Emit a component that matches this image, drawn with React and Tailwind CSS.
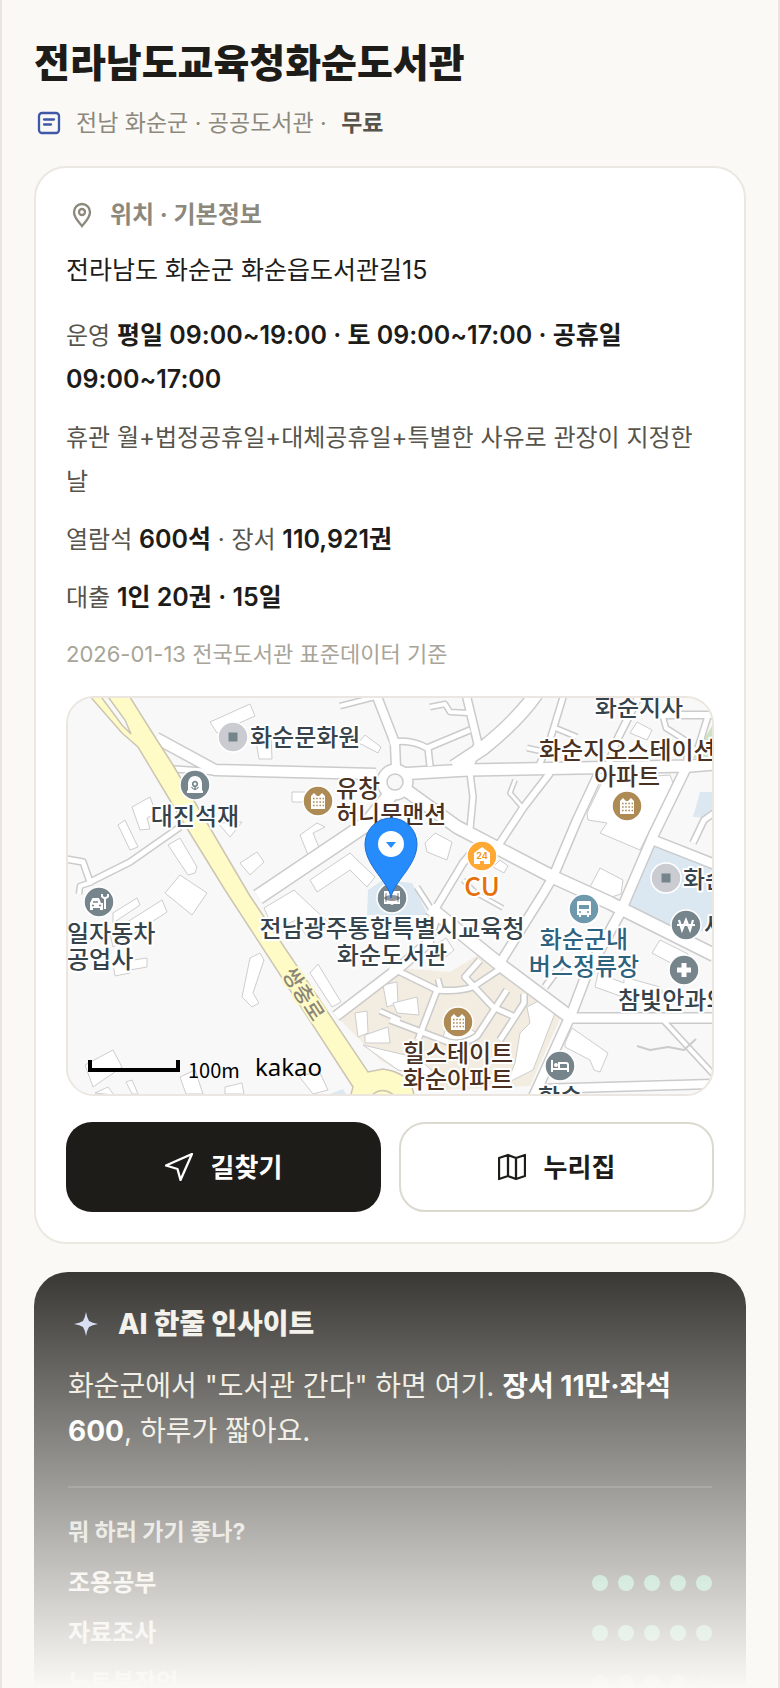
const facts = [
  { label: '운영', parts: [['b', '평일 09:00~19:00 · 토 09:00~17:00 · 공휴일 09:00~17:00']] },
  { label: '휴관', parts: [['t', '월+법정공휴일+대체공휴일+특별한 사유로 관장이 지정한 날']] },
  { label: '열람석', parts: [['b', '600석'], ['t', ' · 장서 '], ['b', '110,921권']] },
  { label: '대출', parts: [['b', '1인 20권 · 15일']] },
];

const purposes = [
  { name: '조용공부', score: 5 },
  { name: '자료조사', score: 5 },
  { name: '노트북작업', score: 4 },
];

// [path, width]
const roads = [
  ['M88 40L147 72L308 76', 10],
  ['M106 71L150 74', 5],
  ['M330 76L400 72L622 68L646 66', 11],
  ['M328 70L327 45L308 -4', 8],
  ['M272 8L311 -2', 4],
  ['M322 45Q340 40 359 50L402 32', 5],
  ['M360 50L362 68', 5],
  ['M398 -4L410 46L402 68', 7],
  ['M468 -4Q450 22 415 50L386 69', 13],
  ['M362 9L377 6L382 14L400 15', 4],
  ['M496 -4L482 42L470 70', 5],
  ['M485 29L509 39', 4],
  ['M459 50L482 55', 4],
  ['M572 -4L549 42L540 68', 6],
  ['M592 17H646', 6],
  ['M595 19L598 30L620 44L618 66', 4],
  ['M640 18L630 50', 5],
  ['M402 75L405 99L402 131', 5],
  ['M482 75L455 110L430 148', 6],
  ['M447 82L442 95L455 110', 3],
  ['M531 75L509 122L485 179L475 196L432 265', 8],
  ['M618 70L585 138L552 215L519 275L505 312L465 400', 9],
  ['M335 90L389 129L485 179L542 205L646 257', 12],
  ['M585 142L646 166', 9],
  ['M646 115L636 122L625 145', 5],
  ['M326 92L300 125L190 199', 14],
  ['M300 130L330 172', 5],
  ['M412 145L395 165L365 215', 6],
  ['M395 182L408 195L435 210', 3],
  ['M349 189L367 217', 4],
  ['M362 210L435 269L502 319', 12],
  ['M368 215L360 245L332 269L268 318', 9],
  ['M504 320H646', 9],
  ['M469 391L646 386', 8],
  ['M595 322L646 377', 4],
  ['M477 289L497 262', 5],
  ['M-2 161L15 164L22 184L62 164L112 129', 5],
  ['M11 196L12 188L24 184', 4],
];

const estateRoads = [
  ['M322 269L369 292Q390 294 405 289L435 269', 5],
  ['M369 292L350 342', 5],
  ['M412 262L397 279L425 309L447 319', 5],
  ['M439 292L409 338Q395 348 380 344L322 322', 5],
  ['M456 296L456 305L432 342', 5],
  ['M370 281L373 292', 4],
  ['M312 313L332 322', 4],
];

const buildings = [
  '142,24 182,6 187,18 149,35', '187,37 203,37 204,61 191,61', '290,45 297,37 313,49 310,55 295,47',
  '64,109 82,99 88,115 79,120 82,131 72,132', '50,127 57,122 70,149 62,152',
  '100,147 112,140 129,169 127,175 120,177', '172,165 189,154 196,164 182,177', '150,125 174,124 162,139',
  '97,195 112,177 139,195 124,217', '232,137 249,125 257,129 245,135 252,152 242,162',
  '224,94 245,94 245,104 224,104', '242,182 282,155 307,179 299,189 282,172 249,194',
  '182,260 192,255 196,262 185,295 191,305 184,309 174,299', '17,367 45,352 54,369 25,389',
  '242,275 250,266 273,304 264,309', '45,215 69,200 72,207 45,225', '42,235 94,202 99,214 45,249',
  '45,265 79,260 79,269 62,272 62,275 47,278', '196,210 226,192 262,226 240,240 228,222 206,232',
  '112,379 127,372 135,396 118,396', '157,389 174,385 176,396 157,396', '230,377 252,375 260,392 245,396',
  '27,395 40,389 46,397', '58,384 64,382 70,396 64,396',
  '315,287 329,284 330,305 319,309', '287,315 299,313 300,335 290,339', '297,337 320,329 322,345 297,345',
  '295,347 350,360 372,380 330,372', '325,305 349,299 351,317 329,315',
  '459,309 472,302 487,315 465,372 439,385 447,365 452,335 462,325', '375,339 382,319 409,335 389,344',
  '497,345 504,330 540,355 532,374 526,372 522,362 497,349', '584,255 592,242 620,256 612,270',
  '530,275 556,285 556,279 592,289 595,295 555,299 527,289', '522,189 532,170 555,182 553,196 540,200',
  '357,145 367,135 384,144 379,162 359,154', '519,115 535,82 602,77 605,85 572,152 532,135 539,125 520,122',
  '562,35 569,24 584,32 579,42', '425,169 432,162 440,168 436,175', '366,248 378,240 386,252 374,262',
];

const labels = [
  { x: 182, y: 48, text: '화순문화원' },
  { x: 127, y: 127, text: '대진석재', anchor: 'middle' },
  { x: 268, y: 99, text: '유창', fill: '#4a3122' },
  { x: 268, y: 125, text: '허니문맨션', fill: '#4a3122' },
  { x: -1, y: 244, text: '일자동차' },
  { x: -1, y: 270, text: '공업사' },
  { x: 324, y: 239, text: '전남광주통합특별시교육청', anchor: 'middle' },
  { x: 324, y: 266, text: '화순도서관', anchor: 'middle' },
  { x: 414, y: 198, text: 'CU', anchor: 'middle', fill: '#e4700b', size: 26 },
  { x: 516, y: 250, text: '화순군내', anchor: 'middle', fill: '#2d637e' },
  { x: 516, y: 277, text: '버스정류장', anchor: 'middle', fill: '#2d637e' },
  { x: 550, y: 311, text: '참빛안과의원' },
  { x: 390, y: 364, text: '힐스테이트', anchor: 'middle', fill: '#4a3122' },
  { x: 390, y: 390, text: '화순아파트', anchor: 'middle', fill: '#4a3122' },
  { x: 492, y: 408, text: '학숙', anchor: 'middle' },
  { x: 571, y: 18, text: '화순지사', anchor: 'middle' },
  { x: 471, y: 61, text: '화순지오스테이션', fill: '#4a3122' },
  { x: 559, y: 87, text: '아파트', anchor: 'middle', fill: '#4a3122' },
  { x: 615, y: 190, text: '화순' },
  { x: 636, y: 236, text: '새' },
];

function Poi({ x, y, color = '#76858c', children }) {
  return (
    <g transform={`translate(${x} ${y})`}>
      <circle r="15" fill={color} stroke="#fff" strokeWidth="1.5" />
      {children}
    </g>
  );
}

function Apartment() {
  return (
    <>
      <path d="M-7 8V-5L-4 -8L-1 -5H1L4 -8L7 -5V8Z" fill="#fff" />
      <path d="M-5 -2.5H6M-5 1H6M-5 4.5H6" stroke="#ae8a54" strokeWidth="1.6" strokeDasharray="1.6 1.6" />
    </>
  );
}

function LibraryMap() {
  return (
    <svg viewBox="0 0 644 396" preserveAspectRatio="xMidYMid slice" className="block h-[396px] w-full" role="img" aria-label="도서관 주변 지도">
      <rect width="644" height="396" fill="#f8f8f8" />
      <polygon points="272,322 332,270 382,274 412,256 432,272 494,316 462,388 372,392 340,378 312,362" fill="#f3ece0" />
      <polygon points="569,185 585,145 609,155 646,172 646,230 612,240 560,205" fill="#dbe8f1" />
      <polygon points="625,119 632,94 646,94 646,120" fill="#dbe8f1" />
      <polygon points="299,217 300,192 315,182 344,185 360,217" fill="#dbe8f1" />
      <polygon points="262,396 275,391 278,396" fill="#dbe8f1" />
      <polygon points="646,25 637,39 625,60 646,60" fill="#cfe3c4" />

      {buildings.map((points) => (
        <polygon key={points} points={points} fill="#fff" stroke="#cdcdcd" strokeWidth="1" />
      ))}

      <g fill="none" strokeLinejoin="round">
        {[...roads, ...estateRoads].map(([d, w]) => (
          <path key={d} d={d} stroke="#cbcbcb" strokeWidth={w + 3} />
        ))}
        <circle cx="327" cy="84" r="18" fill="#fff" stroke="#cbcbcb" strokeWidth="1.5" />
        {[...roads, ...estateRoads].map(([d, w]) => (
          <path key={d} d={d} stroke="#fff" strokeWidth={w} />
        ))}
        <circle cx="327" cy="84" r="8" fill="#f8f8f8" stroke="#cbcbcb" strokeWidth="1.5" />
        <path d="M569 348L582 352L600 349L616 352L628 341" stroke="#cbcbcb" strokeWidth="2" />
      </g>

      <path
        d="M20 -4L54 35L70 49L112 119L157 192L285 389L282 400H347L343 386Q335 374 315 371L300 374L182 198L105 67L87 39L60 -4Z"
        fill="#fefbc6"
        stroke="#cbc5b2"
        strokeWidth="1.5"
      />
      <path d="M31 -4L54 27L63 36L57 22L38 -4Z" fill="#f8f8f8" stroke="#cbc5b2" strokeWidth="1.5" />
      <path d="M304 397Q314 388 326 397" fill="none" stroke="#cbc5b2" strokeWidth="1.5" />

      <Poi x={165} y={39} color="#cbccd1">
        <rect x="-4.5" y="-4.5" width="9" height="9" fill="#76858c" />
      </Poi>
      <Poi x={598} y={180} color="#cbccd1">
        <rect x="-4.5" y="-4.5" width="9" height="9" fill="#76858c" />
      </Poi>
      <Poi x={127} y={87}>
        <path d="M-8 8V5.5H-7V-2Q-6 -9 0 -9Q6 -9 7 -2V5.5H8V8Z" fill="#fff" />
        <circle cy="-1" r="2.3" fill="none" stroke="#76858c" strokeWidth="1.7" />
        <path d="M-3.5 2Q0 7 3.5 2M0 2V5" fill="none" stroke="#76858c" strokeWidth="1.3" />
      </Poi>
      <Poi x={250} y={103} color="#ae8a54"><Apartment /></Poi>
      <Poi x={559} y={108} color="#ae8a54"><Apartment /></Poi>
      <Poi x={390} y={324} color="#ae8a54"><Apartment /></Poi>
      <Poi x={31} y={204}>
        <path d="M-9 8V1L-6.5 -4H0L2 1H4V8H1V6H-6V8Z" fill="#fff" />
        <path d="M6 7V-3M3 -8V-5.5Q6 -2.5 9 -5.5V-8" fill="none" stroke="#fff" strokeWidth="2" />
        <path d="M-6 0H-1M-7 3.5H-5M0 3.5H2" stroke="#76858c" strokeWidth="1.5" />
      </Poi>
      <Poi x={324} y={200}>
        <path d="M-8 -7H-2L0 -5L2 -7H8V6H2L0 7L-2 6H-8Z" fill="#fff" />
        <path d="M-6 -5V4M6 -5V4" stroke="#76858c" strokeWidth="1" />
      </Poi>
      <Poi x={414} y={158} color="#ffa834">
        <path d="M-8 8V-3L0 -9L8 -3V8H2V5H-2V8Z" fill="#fff" />
        <text y="3" textAnchor="middle" fontSize="9" fontWeight="700" fill="#f39a22" className="[font-family:Inter,sans-serif]">24</text>
      </Poi>
      <Poi x={516} y={211} color="#6e98ab">
        <path d="M-6 -8H6L7 -7V6H5V8H3V6H-3V8H-5V6H-7V-7Z" fill="#fff" />
        <path d="M-5 -4H5V0H-5Z" fill="#6e98ab" />
        <path d="M-5 3H-3M3 3H5" stroke="#6e98ab" strokeWidth="1.5" />
      </Poi>
      <Poi x={618} y={227}>
        <path d="M-7 -5L-4 5L0 -5L4 5L7 -5M-9 0H9" fill="none" stroke="#fff" strokeWidth="2.2" />
      </Poi>
      <Poi x={616} y={272}>
        <path d="M0 -7V7M-7 0H7" stroke="#fff" strokeWidth="5" />
      </Poi>
      <Poi x={492} y={368}>
        <path d="M-8 -6V6M-8 3H8M8 6V-1Q8 -3 6 -3H-1V3" fill="none" stroke="#fff" strokeWidth="2" />
        <circle cx="-4" cy="-1" r="2" fill="#fff" />
      </Poi>

      <g
        className="[font-family:'Noto_Sans_CJK_KR',sans-serif]"
        fontWeight="500"
        stroke="#fff"
        strokeWidth="4"
        strokeLinejoin="round"
        paintOrder="stroke"
      >
        {labels.map((l) => (
          <text key={l.text + l.y} x={l.x} y={l.y} fontSize={l.size || 24} textAnchor={l.anchor} fill={l.fill || '#36434b'}>
            {l.text}
          </text>
        ))}
        <text transform="translate(236 296) rotate(57)" y="8" fontSize="21" textAnchor="middle" fill="#8b8678" stroke="#fefbc6">
          쌍충로
        </text>
      </g>

      <ellipse cx="324" cy="200" rx="8" ry="3" fill="#1f2937" opacity="0.5" />
      <path
        d="M323 200C321 184 297 168 297 146A26 26 0 0 1 349 146C349 168 325 184 323 200Z"
        fill="#268bfb"
        stroke="#1e6fd2"
        strokeWidth="1"
      />
      <circle cx="323" cy="146" r="13" fill="#fff" />
      <path d="M318 144H328L323 150Z" fill="#268bfb" />

      <path d="M22 362V372H110V362" fill="none" stroke="#000" strokeWidth="4" />
      <text x="120" y="380" fontSize="20" className="[font-family:'Noto_Sans_CJK_KR',sans-serif]">100m</text>
      <text x="187" y="378" fontSize="24" className="[font-family:'Noto_Sans',sans-serif]">kakao</text>
    </svg>
  );
}

function Dots({ score }) {
  return (
    <div className="flex gap-2.5" role="img" aria-label={`5점 만점에 ${score}점`}>
      {[1, 2, 3, 4, 5].map((n) => (
        <span key={n} className={`size-4 rounded-full ${n <= score ? 'bg-[#5cbc90]' : 'bg-white/20'}`} />
      ))}
    </div>
  );
}

export default function App() {
  return (
    <main className="relative h-screen overflow-hidden border-x-2 border-[#e9e6df] bg-[#faf9f6] px-8 pt-9 text-[#1d1c18] [font-family:Inter,'Noto_Sans_CJK_KR',sans-serif]">
      <header>
        <h1 className="text-[39px] leading-[54px] font-extrabold">전라남도교육청화순도서관</h1>
        <div className="mt-4 flex items-center gap-3 text-[23px] leading-[34px] text-[#8c887c]">
          <svg viewBox="0 0 30 30" className="size-[30px]" fill="none" stroke="#3f58a8" strokeWidth="2.3" strokeLinecap="round">
            <rect x="5" y="5" width="20" height="20" rx="3" />
            <path d="M10 11.5H20M10 16.5H17" />
          </svg>
          <p>
            전남 화순군 · 공공도서관 · <b className="ml-2 font-semibold text-[#57544b]">무료</b>
          </p>
        </div>
      </header>

      <section className="mt-[26px] rounded-[32px] border-2 border-[#ebe8e1] bg-white p-[30px]">
        <h2 className="flex items-center gap-3 text-[24px] leading-[34px] font-bold text-[#8c887c]">
          <svg viewBox="0 0 32 32" className="size-8" fill="none" stroke="currentColor" strokeWidth="2.3">
            <path d="M16 27C13 23 8 19 8 13A8 8 0 0 1 24 13C24 19 19 23 16 27Z" />
            <circle cx="16" cy="13" r="3" />
          </svg>
          위치 · 기본정보
        </h2>
        <p className="mt-4 text-[25px] leading-[44px]">전라남도 화순군 화순읍도서관길15</p>

        <div className="mt-[22px] flex flex-col gap-3.5 text-[24px] leading-[44px] text-[#57544b]">
          {facts.map((f) => (
            <p key={f.label}>
              {f.label}{' '}
              {f.parts.map(([kind, text]) =>
                kind === 'b' ? <b key={text} className="text-[25px] leading-none font-semibold text-[#1d1c18]">{text}</b> : text
              )}
            </p>
          ))}
        </div>
        <p className="mt-3.5 text-[22px] leading-10 text-[#a8a498]">2026-01-13 전국도서관 표준데이터 기준</p>

        <div className="mt-[22px] overflow-hidden rounded-[28px] border-2 border-[#ebe6df]">
          <LibraryMap />
        </div>

        <div className="mt-[26px] grid grid-cols-2 gap-[18px] text-[26px] font-bold">
          <button className="flex h-[90px] items-center justify-center gap-[18px] rounded-[26px] bg-[#1d1c18] text-white">
            <svg viewBox="0 0 28 28" className="size-7" fill="none" stroke="currentColor" strokeWidth="2.3" strokeLinejoin="round">
              <path d="M1 12.5L27 1L15.5 27L12.5 16Z" />
            </svg>
            길찾기
          </button>
          <button className="flex h-[90px] items-center justify-center gap-[18px] rounded-[26px] border-2 border-[#dcd9d0] bg-white">
            <svg viewBox="0 0 28 28" className="size-7" fill="none" stroke="currentColor" strokeWidth="2.3" strokeLinejoin="round">
              <path d="M1 5L10 2L18 5L27 2V23L18 26L10 23L1 26ZM10 2V23M18 5V26" />
            </svg>
            누리집
          </button>
        </div>
      </section>

      <section className="mt-7 rounded-[34px] bg-[#1d1c18] p-[34px] text-[#f2efe8]">
        <h2 className="flex items-center gap-3.5 text-[28px] leading-9 font-extrabold">
          <svg viewBox="0 0 36 36" className="size-9" fill="#cfd8f5">
            <path d="M18 6Q19 12 21 15Q24 17 30 18Q24 19 21 21Q19 24 18 30Q17 24 15 21Q12 19 6 18Q12 17 15 15Q17 12 18 6Z" />
          </svg>
          AI 한줄 인사이트
        </h2>
        <p className="mt-[22px] text-[28px] leading-[45px] text-[#ece8dd]">
          화순군에서 "도서관 간다" 하면 여기. <b className="font-bold text-white">장서 11만·좌석 600</b>, 하루가 짧아요.
        </p>
        <div className="mt-8 border-t-2 border-white/15 pt-7">
          <h3 className="text-[23px] leading-8 font-bold text-[#d5d2c8]">뭐 하러 가기 좋나?</h3>
          <ul className="mt-2.5 text-[24px] leading-[50px] font-semibold">
            {purposes.map((p) => (
              <li key={p.name} className="flex items-center justify-between">
                {p.name}
                <Dots score={p.score} />
              </li>
            ))}
          </ul>
        </div>
      </section>

      <div className="pointer-events-none absolute inset-x-0 bottom-0 h-[476px] bg-linear-to-b from-[#faf9f6]/0 to-[#faf9f6]" />
    </main>
  );
}
